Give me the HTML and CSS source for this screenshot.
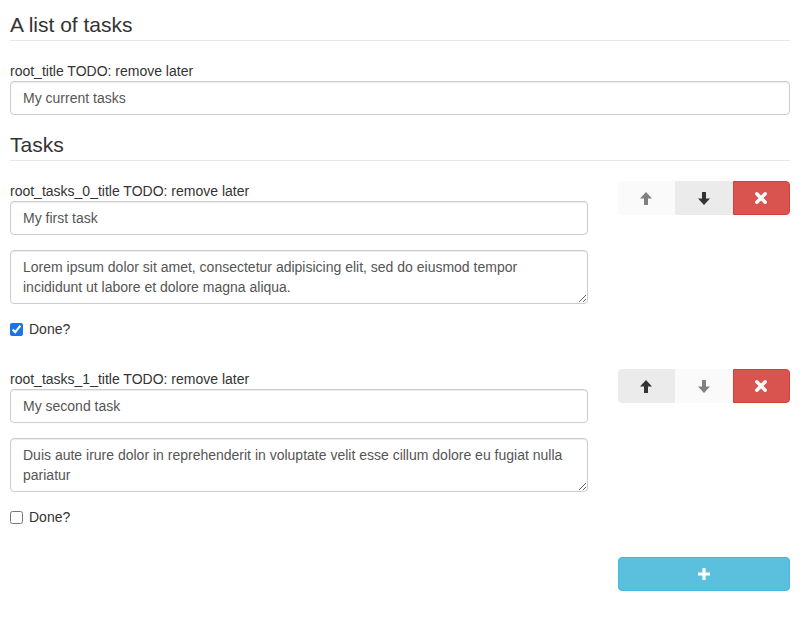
FILE: index.html
```html
<!DOCTYPE html>
<html>
<head>
<meta charset="utf-8">
<link rel="stylesheet" href="styles.css">
</head>
<body>
<form class="form">
  <fieldset class="fs">
    <legend class="legend">A list of tasks</legend>
    <div class="form-group">
      <label class="label">root_title TODO: remove later</label>
      <input class="control" type="text" value="My current tasks">
    </div>
    <fieldset class="fs tasks">
      <legend class="legend">Tasks</legend>

      <div class="item">
        <div class="item-main">
          <div class="form-group">
            <label class="label">root_tasks_0_title TODO: remove later</label>
            <input class="control" type="text" value="My first task">
          </div>
          <div class="form-group">
            <textarea class="control area" rows="2">Lorem ipsum dolor sit amet, consectetur adipisicing elit, sed do eiusmod tempor incididunt ut labore et dolore magna aliqua.</textarea>
          </div>
          <label class="checkbox"><input type="checkbox" checked> Done?</label>
        </div>
        <div class="toolbox">
          <div class="btn-group">
            <button type="button" class="btn btn-move is-disabled"><svg width="12" height="13" viewBox="0 0 12 13"><path d="M6 0L12 6.5H8V13H4V6.5H0Z" fill="currentColor"/></svg></button>
            <button type="button" class="btn btn-move"><svg width="12" height="13" viewBox="0 0 12 13"><path d="M6 13L12 6.5H8V0H4V6.5H0Z" fill="currentColor"/></svg></button>
            <button type="button" class="btn btn-danger"><svg width="12" height="12" viewBox="0 0 12 12"><path d="M1.8 1.8L10.2 10.2M10.2 1.8L1.8 10.2" stroke="currentColor" stroke-width="3.4" stroke-linecap="round"/></svg></button>
          </div>
        </div>
      </div>

      <div class="item">
        <div class="item-main">
          <div class="form-group">
            <label class="label">root_tasks_1_title TODO: remove later</label>
            <input class="control" type="text" value="My second task">
          </div>
          <div class="form-group">
            <textarea class="control area" rows="2">Duis aute irure dolor in reprehenderit in voluptate velit esse cillum dolore eu fugiat nulla pariatur</textarea>
          </div>
          <label class="checkbox"><input type="checkbox"> Done?</label>
        </div>
        <div class="toolbox">
          <div class="btn-group">
            <button type="button" class="btn btn-move"><svg width="12" height="13" viewBox="0 0 12 13"><path d="M6 0L12 6.5H8V13H4V6.5H0Z" fill="currentColor"/></svg></button>
            <button type="button" class="btn btn-move is-disabled"><svg width="12" height="13" viewBox="0 0 12 13"><path d="M6 13L12 6.5H8V0H4V6.5H0Z" fill="currentColor"/></svg></button>
            <button type="button" class="btn btn-danger"><svg width="12" height="12" viewBox="0 0 12 12"><path d="M1.8 1.8L10.2 10.2M10.2 1.8L1.8 10.2" stroke="currentColor" stroke-width="3.4" stroke-linecap="round"/></svg></button>
          </div>
        </div>
      </div>

      <div class="add-row">
        <button type="button" class="btn btn-info"><svg width="12" height="12" viewBox="0 0 12 12"><path d="M4.4 0H7.6V4.4H12V7.6H7.6V12H4.4V7.6H0V4.4H4.4Z" fill="currentColor"/></svg></button>
      </div>
    </fieldset>
  </fieldset>
</form>
</body>
</html>
```

FILE: styles.css
```css
* { box-sizing: border-box; }
html, body { margin: 0; padding: 0; background: #fff; }
body {
  font-family: "Liberation Sans", Arial, sans-serif;
  font-size: 14px;
  line-height: 20px;
  color: #333;
}
.form { padding: 10px 15px 0 10px; }
.fs { border: 0; margin: 0; padding: 0; min-width: 0; }
.legend {
  display: block;
  width: 100%;
  padding: 0;
  margin: 0 0 20px;
  font-size: 21px;
  line-height: 30px;
  color: #333;
  border-bottom: 1px solid #e5e5e5;
}
.form-group { margin-bottom: 15px; }
.label { display: block; font-weight: normal; }
.control {
  display: block;
  width: 100%;
  height: 34px;
  padding: 6px 12px;
  font-family: inherit;
  font-size: 14px;
  line-height: 20px;
  color: #555;
  background: #fff;
  border: 1px solid #ccc;
  border-radius: 4px;
  box-shadow: inset 0 1px 1px rgba(0,0,0,.075);
  margin: 0;
}
.area { height: 54px; resize: vertical; }
.item { display: flex; gap: 30px; margin-bottom: 30px; }
.item-main { flex: 1; min-width: 0; }
.toolbox { width: 172.5px; flex: none; }
.checkbox { display: flex; align-items: center; gap: 6px; height: 20px; }
.checkbox input { margin: 0; width: 13px; height: 13px; accent-color: #1a73e8; }
.btn-group { display: flex; }
.btn {
  display: flex;
  align-items: center;
  justify-content: center;
  height: 34px;
  padding: 0;
  border: 1px solid transparent;
  font: inherit;
  cursor: pointer;
}
.btn-group .btn { flex: 1; }
.btn-move { background: #ebebeb; border-color: #ebebeb; color: #333; }
.btn-move:first-child { border-radius: 4px 0 0 4px; }
.btn-move.is-disabled { background: #fafafa; border-color: #fafafa; color: #808080; }
.btn-danger { background: #d9534f; border-color: #d43f3a; color: #fff; border-radius: 0 4px 4px 0; }
.add-row { display: flex; justify-content: flex-end; }
.btn-info { width: 172.5px; background: #5bc0de; border-color: #46b8da; color: #fff; border-radius: 4px; }
```
